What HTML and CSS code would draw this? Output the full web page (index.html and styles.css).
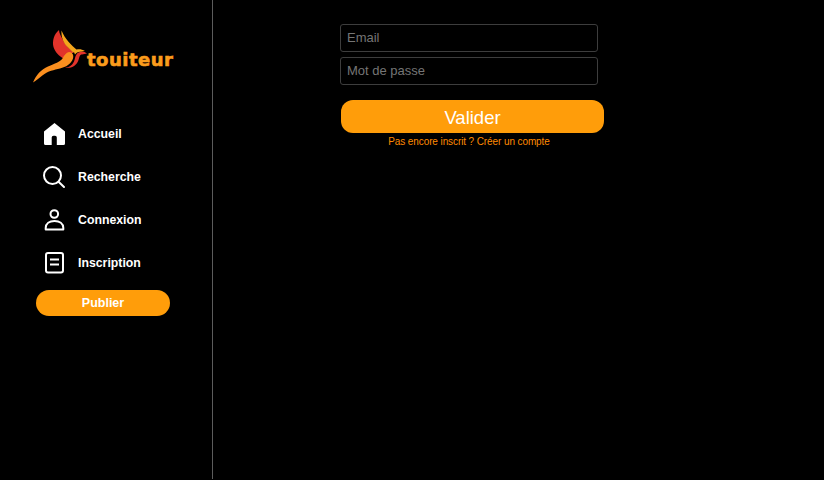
FILE: index.html
```html
<!DOCTYPE html>
<html lang="fr">
<head>
<meta charset="utf-8">
<title>Touiteur</title>
<link rel="stylesheet" href="styles.css">
</head>
<body>
<div class="page">
  <aside class="sidebar">
    <a class="logo" href="#">
      <svg class="logo-bird" width="59" height="60" viewBox="0 0 59 60">
        <path fill="#e2332b" d="M31 5 C26 9 24 16 25.500 22 C27 27 31 31 36 34 C38 30 40 28 43 28 L46 28 C42 24 37 20 35 15 C33 11 31 8 31 5Z"/>
        <path fill="#f4a51c" d="M33.500 5.500 C33 12 35.500 18 39.500 22 C42 24.500 44 26.500 45 27.500 L49 25 C43 20 37 14 33.500 5.500Z"/>
        <path fill="#e2332b" d="M37 42.500 C42 42.500 45.500 39 46.500 35 C47.500 31 48 28 52 27 C54 26 57 27 59 28.500 L54 29.500 C51.500 29.500 51.500 32 50.500 35 C49 40 44 44 37 42.500Z"/>
        <path fill="#f4a51c" d="M45.500 26 C49 23.500 53 23.500 57 26 L52 26.800 C50 27 48 28 47 29.500Z"/>
        <path fill="#fb8f1f" d="M5 57.500 C8 50 13 44.500 20 41.500 C27 38.500 32 37 34.500 33.500 C36.500 30 38 27.500 41 27 C44.500 27 46 30 45 33.500 C43 39 38 42 32 43.500 C26 45 20 46 15 50 C11 53 8 55.500 5 57.500Z"/>
      </svg>
      <span class="logo-text">touiteur</span>
    </a>
    <nav class="nav">
      <a class="nav-item" href="#">
        <svg class="nav-icon" width="24" height="24" viewBox="0 0 24 24"><path fill="#fff" d="M12.500 1 L23 9.500 V21.500 Q23 23 21.500 23 H14.800 V15.500 Q14.800 13.700 13 13.700 H11.500 Q9.700 13.700 9.700 15.500 V23 H3.500 Q2 23 2 21.500 V9.500Z"/></svg>
        <span>Accueil</span>
      </a>
      <a class="nav-item" href="#">
        <svg class="nav-icon" width="24" height="24" viewBox="0 0 24 24" fill="none" stroke="#fff" stroke-width="2" stroke-linecap="round"><circle cx="10.500" cy="10.500" r="8.500"/><path d="M16.800 17 L22 22"/></svg>
        <span>Recherche</span>
      </a>
      <a class="nav-item" href="#">
        <svg class="nav-icon" width="24" height="24" viewBox="0 0 24 24" fill="none" stroke="#fff" stroke-width="2"><circle cx="12.300" cy="6" r="3.800"/><path d="M3.700 21.500 V20 C3.700 15.500 7.500 13 12.500 13 C17.500 13 21.300 15.500 21.300 20 V21.500Z" stroke-linejoin="round"/></svg>
        <span>Connexion</span>
      </a>
      <a class="nav-item" href="#">
        <svg class="nav-icon" width="24" height="24" viewBox="0 0 24 24" fill="none" stroke="#fff" stroke-width="2"><rect x="4" y="2" width="17" height="19.500" rx="2"/><path d="M8 8.500 H17 M8 13.500 H17"/></svg>
        <span>Inscription</span>
      </a>
    </nav>
    <button class="publish" type="button">Publier</button>
  </aside>
  <main class="content">
    <form class="form">
      <input class="field" type="text" placeholder="Email">
      <input class="field" type="password" placeholder="Mot de passe">
      <button class="submit" type="button">Valider</button>
      <a class="signup" href="#">Pas encore inscrit ? Créer un compte</a>
    </form>
  </main>
</div>
</body>
</html>
```
FILE: styles.css
```css
* { box-sizing: border-box; }
html, body { margin: 0; height: 100%; background: #000; }
body { font-family: "Liberation Sans", Arial, sans-serif; color: #fff; overflow: hidden; }
a { text-decoration: none; color: inherit; }
.page { display: flex; height: 479px; }
.sidebar {
  width: 213px;
  flex: none;
  border-right: 1px solid #5c5c5c;
  padding: 25px 0 0 28px;
}
.logo { display: flex; align-items: flex-start; height: 60px; }
.logo-bird { flex: none; display: block; }
.logo-text {
  font-family: "DejaVu Sans", sans-serif;
  font-weight: 700;
  font-size: 18px;
  line-height: 20px;
  color: #fb9c1c;
  margin: 25px 0 0 0;
  letter-spacing: 0.5px;
  -webkit-text-stroke: 0.6px #fb9c1c;
}
.nav { display: flex; flex-direction: column; gap: 19px; margin-top: 37px; padding-left: 14px; }
.nav-item { display: flex; align-items: center; height: 24px; gap: 12px; font-size: 12.300px; font-weight: 700; }
.nav-icon { flex: none; display: block; }
.publish {
  display: block;
  width: 134px;
  height: 26px;
  margin: 15px 0 0 8px;
  border: 0;
  border-radius: 13px;
  background: #ff9d0a;
  color: #fff;
  font: 700 12.500px "Liberation Sans", Arial, sans-serif;
}
.content { flex: 1; padding: 24px 0 0 127px; }
.form { display: flex; flex-direction: column; width: 264px; align-items: flex-start; }
.field {
  width: 258px;
  height: 27.500px;
  margin-bottom: 5.500px;
  padding: 0 6px;
  background: #000;
  border: 1px solid #3d3d3d;
  border-radius: 3px;
  color: #fff;
  font: 13px "Liberation Sans", Arial, sans-serif;
}
.field::placeholder { color: #757575; opacity: 1; }
.submit {
  width: 263px;
  height: 33px;
  margin: 10px 0 0 1px;
  padding: 2px 0 0;
  border: 0;
  border-radius: 12px;
  background: #ff9d0a;
  color: #fff;
  font: 18.500px "Liberation Sans", Arial, sans-serif;
}
.signup { align-self: stretch; text-align: center; margin-top: 3px; font-size: 10px; letter-spacing: -0.100px; line-height: 12px; color: #ff8a00; padding-right: 6px; }
```
